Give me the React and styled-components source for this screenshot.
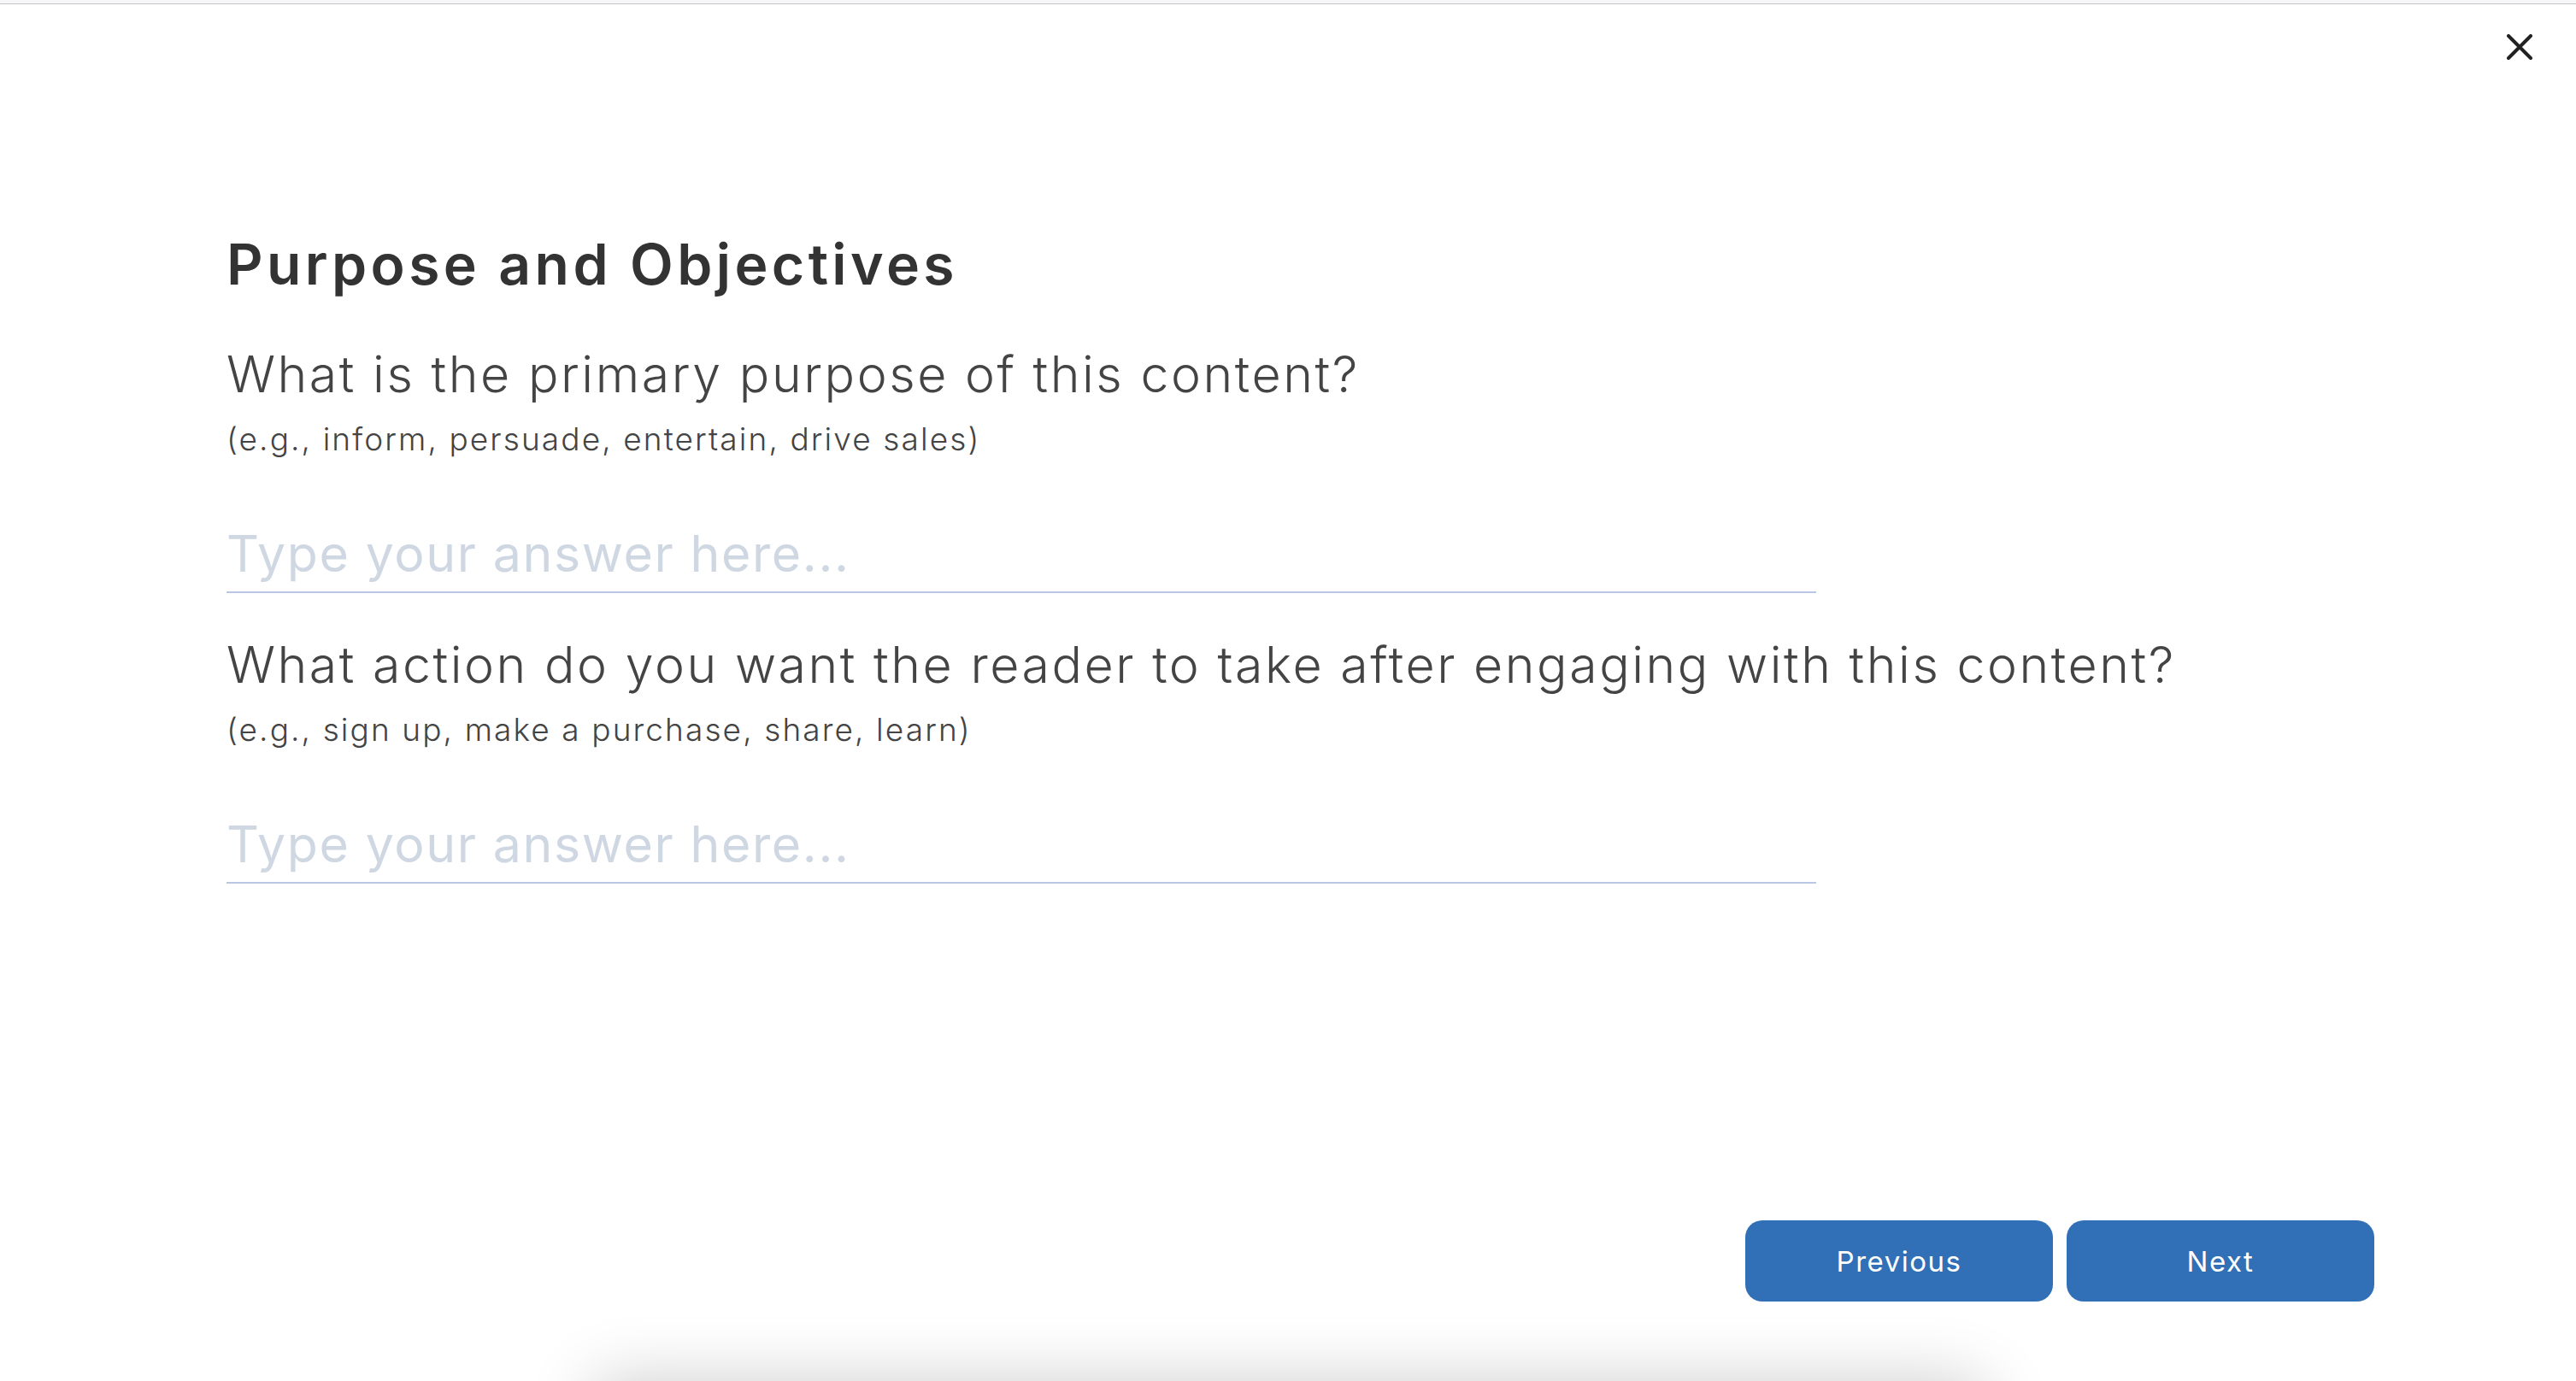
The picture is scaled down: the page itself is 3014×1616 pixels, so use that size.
import styled, { createGlobalStyle } from "styled-components";

const GlobalStyle = createGlobalStyle`
  * {
    box-sizing: border-box;
  }

  body {
    margin: 0;
    background: #ffffff;
    font-family: Inter, "Noto Sans", sans-serif;
    overflow: hidden;
  }
`;

const Page = styled.div`
  display: flex;
  flex-direction: column;
  height: 1616px;
  overflow: hidden;
  background: #ffffff;
`;

const TopStrip = styled.div`
  height: 5px;
  flex-shrink: 0;
  background: #f6f6f8;
  border-bottom: 1px solid #c6c6ca;
`;

const Header = styled.div`
  display: flex;
  justify-content: flex-end;
  padding: 35px 51px 0 0;
`;

const CloseButton = styled.button`
  display: flex;
  align-items: center;
  justify-content: center;
  width: 30px;
  height: 30px;
  padding: 0;
  border: none;
  background: transparent;
  cursor: pointer;
`;

const Main = styled.main`
  flex: 1;
  display: flex;
  flex-direction: column;
  padding: 206px 0 0 265px;
`;

const Title = styled.h1`
  margin: 0;
  font-size: 66px;
  line-height: 1;
  font-weight: 600;
  color: #333333;
  letter-spacing: 4.4px;
`;

const QuestionBlock = styled.section`
  display: flex;
  flex-direction: column;
  margin-top: ${({ $first }) => ($first ? "66px" : "54px")};
`;

const Question = styled.h2`
  margin: 0;
  font-size: 59px;
  line-height: 1;
  font-weight: 300;
  color: #444444;
  letter-spacing: 2.55px;
`;

const Hint = styled.p`
  margin: 28px 0 0;
  font-size: 37px;
  line-height: 1;
  font-weight: 300;
  color: #444444;
  letter-spacing: 2.1px;
`;

const AnswerInput = styled.input`
  width: 1860px;
  margin-top: 80px;
  padding: 0 0 9px;
  border: none;
  border-bottom: 2px solid #b9c7e4;
  outline: none;
  background: transparent;
  font-family: Inter, "Noto Sans", sans-serif;
  font-size: 59px;
  line-height: 1;
  font-weight: 400;
  letter-spacing: 1.6px;
  color: #333333;

  &::placeholder {
    color: #cfd8e2;
  }
`;

const Footer = styled.footer`
  display: flex;
  justify-content: flex-end;
  gap: 16px;
  padding: 0 236px 93px 0;
`;

const NavButton = styled.button`
  width: 360px;
  height: 95px;
  border: none;
  border-radius: 20px;
  background: #3170b6;
  color: #ffffff;
  font-family: Inter, "Noto Sans", sans-serif;
  font-size: 33px;
  font-weight: 400;
  letter-spacing: 1.5px;
  cursor: pointer;
`;

const NextCard = styled.div`
  flex-shrink: 0;
  align-self: center;
  width: 1630px;
  height: 200px;
  margin-bottom: -200px;
  border-radius: 24px;
  background: #ffffff;
  box-shadow: 0 0 80px rgba(0, 0, 0, 0.2);
`;

const questions = [
  {
    id: "purpose",
    label: "What is the primary purpose of this content?",
    hint: "(e.g., inform, persuade, entertain, drive sales)",
  },
  {
    id: "action",
    label:
      "What action do you want the reader to take after engaging with this content?",
    hint: "(e.g., sign up, make a purchase, share, learn)",
  },
];

const CloseIcon = () => (
  <svg width="30" height="30" viewBox="0 0 30 30" fill="none">
    <path
      d="M2 2 L28 28 M28 2 L2 28"
      stroke="#222222"
      strokeWidth="4"
      strokeLinecap="round"
    />
  </svg>
);

export default function App() {
  return (
    <>
      <GlobalStyle />
      <Page>
        <TopStrip />
        <Header>
          <CloseButton aria-label="Close">
            <CloseIcon />
          </CloseButton>
        </Header>
        <Main>
          <Title>Purpose and Objectives</Title>
          {questions.map((q, i) => (
            <QuestionBlock key={q.id} $first={i === 0}>
              <Question>{q.label}</Question>
              <Hint>{q.hint}</Hint>
              <AnswerInput placeholder="Type your answer here..." />
            </QuestionBlock>
          ))}
        </Main>
        <Footer>
          <NavButton>Previous</NavButton>
          <NavButton>Next</NavButton>
        </Footer>
        <NextCard />
      </Page>
    </>
  );
}
